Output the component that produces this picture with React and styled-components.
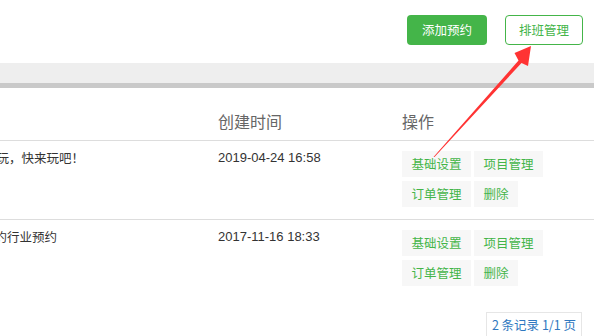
import React from "react";
import styled, { createGlobalStyle } from "styled-components";

const GlobalStyle = createGlobalStyle`
  html, body { margin: 0; padding: 0; background: #fff; }
  body { font-family: "Liberation Sans", "Noto Sans CJK SC", sans-serif; }
  * { box-sizing: border-box; }
`;

const GREEN = "#44b549";

const Page = styled.div`
  position: relative;
  width: 594px;
  height: 336px;
  overflow: hidden;
  background: #fff;
`;

const TopBar = styled.div`
  height: 63px;
  display: flex;
  justify-content: flex-end;
  align-items: flex-start;
  gap: 18px;
  padding: 15px 11px 0 0;
`;

const Button = styled.button`
  height: 30px;
  padding: 0 ${(p) => (p.$outline ? "13px" : "15px")};
  border: ${(p) => (p.$outline ? `1px solid ${GREEN}` : "none")};
  border-radius: 4px;
  background: ${(p) => (p.$outline ? "#fff" : GREEN)};
  color: ${(p) => (p.$outline ? GREEN : "#fff")};
  font-family: "Noto Sans CJK SC", sans-serif;
  font-size: 12.5px;
  line-height: 28px;
  cursor: pointer;
`;

const Band = styled.div`
  height: 25px;
  background: #eeeeee;
  border-bottom: 5px solid #c9c9c9;
`;

const Grid = styled.div`
  display: grid;
  grid-template-columns: 218px 184px 1fr;
  border-bottom: ${(p) => (p.$last ? "none" : "1px solid #dddddd")};
  min-height: ${(p) => (p.$head ? "53px" : "79px")};
  align-items: ${(p) => (p.$head ? "end" : "start")};
`;

const HeadCell = styled.div`
  font-family: "Noto Sans CJK SC", sans-serif;
  font-size: 16px;
  line-height: 20px;
  color: #666;
  padding-bottom: 9px;
`;

const TextCell = styled.div`
  overflow: hidden;
  white-space: nowrap;
  padding-top: 8px;
  font-size: 12.5px;
  line-height: 18px;
  color: #333;
`;

const Clipped = styled.span`
  display: inline-block;
  margin-left: ${(p) => p.$shift}px;
  font-family: "Noto Sans CJK SC", sans-serif;
`;

const DateText = styled.span`
  font-family: "Liberation Sans", sans-serif;
  font-size: 13px;
`;

const Actions = styled.div`
  padding-top: 10px;
  display: flex;
  flex-wrap: wrap;
  gap: 4px 3px;
  width: 145px;
`;

const ActionButton = styled.span`
  height: 26px;
  padding: 0 9.5px;
  background: #f7f7f7;
  color: ${GREEN};
  font-family: "Noto Sans CJK SC", sans-serif;
  font-size: 12.5px;
  line-height: 26px;
  white-space: nowrap;
`;

const Footer = styled.div`
  display: flex;
  justify-content: flex-end;
  padding: 13px 12px 0 0;
`;

const Pager = styled.div`
  height: 26px;
  padding: 0 5px;
  border: 1px solid #e6e6e6;
  color: #2f78c0;
  font-family: "Noto Sans CJK SC", sans-serif;
  font-size: 12.5px;
  line-height: 24px;
  white-space: nowrap;
`;

const Overlay = styled.svg`
  position: absolute;
  left: 0;
  top: 0;
  pointer-events: none;
`;

const rows = [
  { text: "玩，快来玩吧！", shift: -3.5, date: "2019-04-24 16:58" },
  { text: "约行业预约", shift: -5.5, date: "2017-11-16 18:33" },
];

const actions = ["基础设置", "项目管理", "订单管理", "删除"];

export default function App() {
  return (
    <Page>
      <GlobalStyle />
      <TopBar>
        <Button>添加预约</Button>
        <Button $outline>排班管理</Button>
      </TopBar>
      <Band />
      <Grid $head>
        <HeadCell />
        <HeadCell>创建时间</HeadCell>
        <HeadCell>操作</HeadCell>
      </Grid>
      {rows.map((r, i) => (
        <Grid key={i} $last={i === rows.length - 1}>
          <TextCell>
            <Clipped $shift={r.shift}>{r.text}</Clipped>
          </TextCell>
          <TextCell>
            <DateText>{r.date}</DateText>
          </TextCell>
          <Actions>
            {actions.map((a) => (
              <ActionButton key={a}>{a}</ActionButton>
            ))}
          </Actions>
        </Grid>
      ))}
      <Footer>
        <Pager>2 条记录 1/1 页</Pager>
      </Footer>
      <Overlay width="594" height="336" viewBox="0 0 594 336">
        <polygon
          points="433.5,157 518.5,60.5 514.5,53 531,46 528,66 521.5,63 434.5,157"
          fill="#ff3333"
        />
      </Overlay>
    </Page>
  );
}
